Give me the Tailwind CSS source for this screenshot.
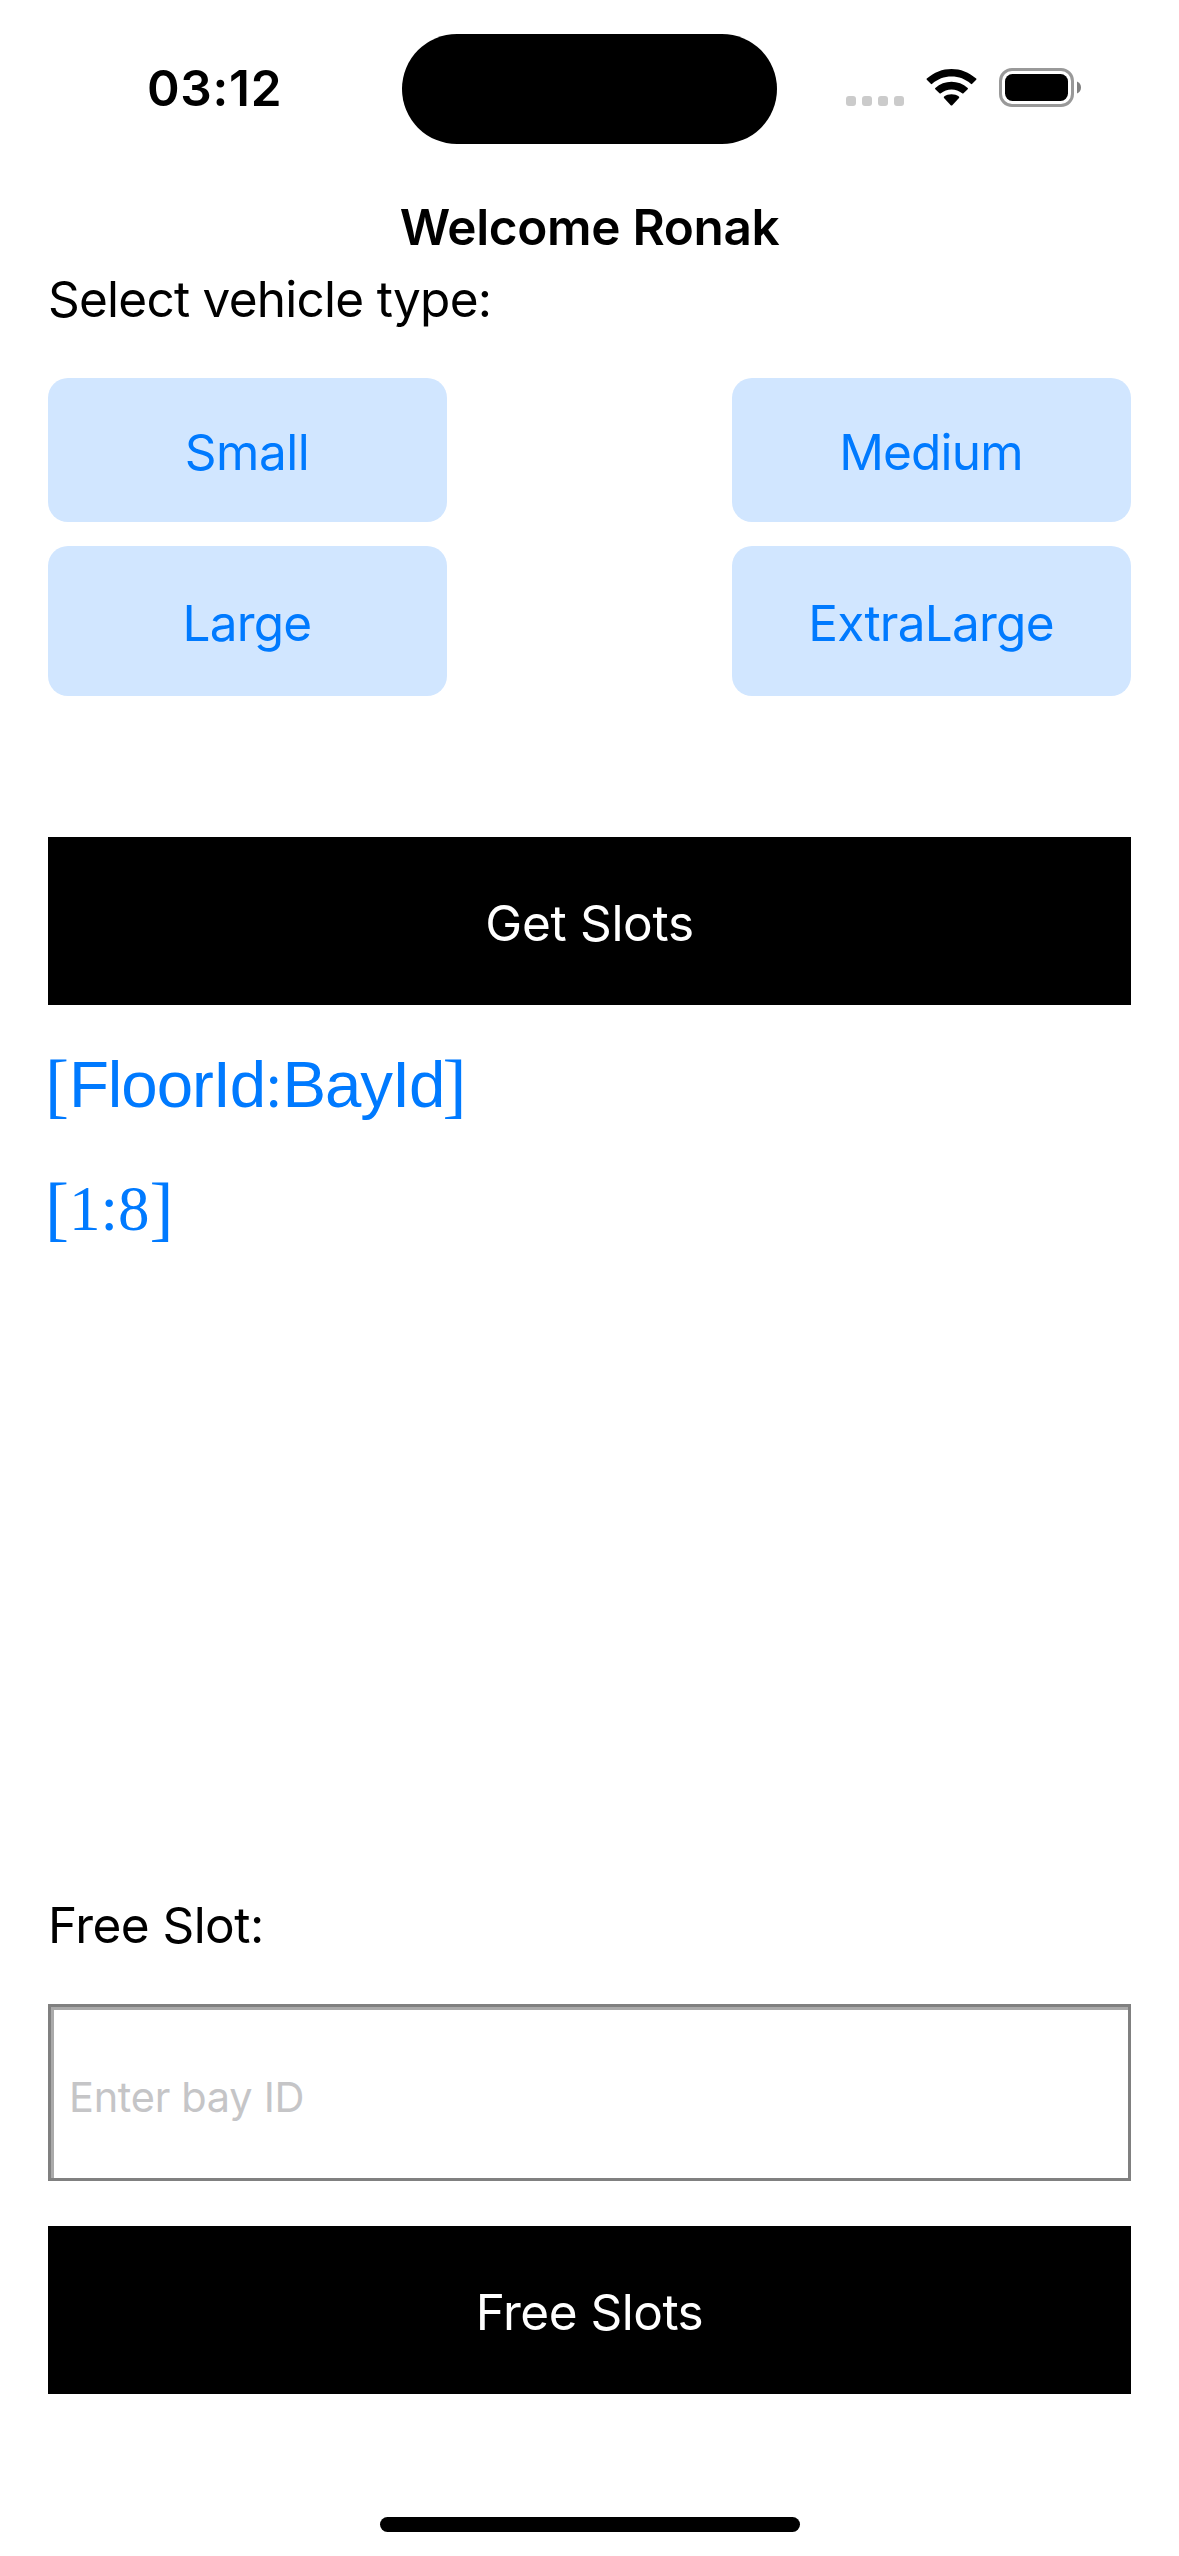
<!DOCTYPE html>
<html lang="en">
<head>
<meta charset="utf-8">
<title>Parking</title>
<script src="https://cdn.jsdelivr.net/npm/@tailwindcss/browser@4"></script>
</head>
<body class="bg-white">
<div class="flex h-[2556px] w-[1179px] flex-col overflow-hidden bg-white font-['Inter',sans-serif] text-[49.5px] leading-[60px] tracking-[-0.75px] text-black">
  <header class="flex h-[197px] shrink-0 items-start">
    <div class="w-[402px] pt-[58px] pl-[147px] font-semibold tracking-[0.7px]">03:12</div>
    <div class="mt-[34px] h-[110px] w-[375px] rounded-full bg-black"></div>
    <svg class="mt-[50px] ml-[53px] h-[70px] w-[270px]" viewBox="0 0 270 70">
      <g fill="#cbcbcb">
        <rect x="16" y="46" width="10" height="10" rx="3"/>
        <rect x="32" y="46" width="10" height="10" rx="3"/>
        <rect x="48" y="46" width="10" height="10" rx="3"/>
        <rect x="64" y="46" width="10" height="10" rx="3"/>
      </g>
      <path d="M96.8 29.8Q96.2 29.200 96.800 28.600C104 22 112.500 18.900 121.500 18.900S139 22 146.200 28.600Q146.800 29.200 146.200 29.800L142.200 33.800Q141.500 34.500 140.800 33.800C135.500 29 128.800 26.500 121.500 26.500S107.500 29 102.200 33.800Q101.500 34.500 100.800 33.800Z"/>
      <path d="M105.300 39.200Q104.700 38.600 105.300 38C109.800 34 115.500 31.800 121.500 31.800S133.200 34 137.700 38Q138.300 38.600 137.700 39.200L133.500 43.300Q132.800 43.900 132.100 43.300C129.200 40.700 125.500 39.400 121.500 39.400S113.800 40.700 110.900 43.300Q110.200 43.900 109.500 43.300Z"/>
      <path d="M114 47.900Q113.400 47.200 114.100 46.600C116.200 45 118.700 44.300 121.500 44.300S126.800 45 128.900 46.600Q129.600 47.200 129 47.900L122.300 55.200Q121.500 55.900 120.700 55.200Z"/>
      <rect x="170.500" y="19.500" width="72" height="36" rx="11.500" fill="none" stroke="#999" stroke-width="3"/>
      <rect x="175" y="24" width="63" height="27" rx="7.500"/>
      <path d="M247 31.500C249.500 32.500 251 34.800 251 37.500S249.500 42.500 247 43.500Z" fill="#808080"/>
    </svg>
  </header>

  <main class="flex grow flex-col px-[48px]">
    <h1 class="h-[72px] text-center font-semibold tracking-[-0.35px]">Welcome Ronak</h1>
    <p class="h-[109px]">Select vehicle type:</p>

    <div class="grid grid-cols-[399px_399px] grid-rows-[144px_150px] justify-between gap-y-6 text-[#007aff]">
      <button class="rounded-[20px] bg-[#d1e6ff] pt-1 pr-px tracking-[-0.5px]">Small</button>
      <button class="rounded-[20px] bg-[#d1e6ff] pt-1 pr-px tracking-[-0.8px]">Medium</button>
      <button class="rounded-[20px] bg-[#d1e6ff] pt-1 pr-px tracking-[-0.8px]">Large</button>
      <button class="rounded-[20px] bg-[#d1e6ff] pt-1 pr-px tracking-[-0.75px]">ExtraLarge</button>
    </div>

    <button class="mt-[141px] h-[168px] shrink-0 bg-black pt-1 tracking-[-0.3px] text-white">Get Slots</button>

    <div class="mt-[33px] flex h-[123px] items-baseline font-['Liberation_Serif',serif] text-[63px] leading-[90px] tracking-normal text-[#007aff]">
      <span class="-ml-[3px] w-[24px] translate-y-0.5 text-[72px]">[</span><span class="w-[196px] font-['Liberation_Sans',sans-serif] text-[65.4px] tracking-[-1.07px]">FloorId</span><span class="w-[17.5px]">:</span><span class="w-[161px] font-['Liberation_Sans',sans-serif] text-[65.4px] tracking-[-1.07px]">BayId</span><span class="-ml-px translate-y-0.5 text-[72px]">]</span>
    </div>
    <div class="flex h-[123px] items-baseline font-['Liberation_Serif',serif] text-[63px] leading-[90px] tracking-normal text-[#007aff]">
      <span class="-ml-[3px] w-[24px] translate-y-0.5 text-[72px]">[</span><span>1:8</span><span class="translate-y-0.5 text-[72px]">]</span>
    </div>

    <label class="mt-auto h-[109px] tracking-[-0.55px]">Free Slot:</label>
    <div class="h-[177px] shrink-0 border-[3px] border-[#808080]">
      <div class="flex h-full items-center border-t-[3px] border-l-[3px] border-[#aaa] pt-[5px] pl-[15px] text-[41.5px] tracking-[-0.3px] text-[#c5c5c7]">Enter bay ID</div>
    </div>
    <button class="mt-[45px] h-[168px] shrink-0 bg-black pt-1 tracking-[-0.5px] text-white">Free Slots</button>
  </main>
  <footer class="flex h-[162px] shrink-0 items-end justify-center pb-6">
    <div class="h-[15px] w-[420px] rounded-full bg-black"></div>
  </footer>
</div>
</body>
</html>
